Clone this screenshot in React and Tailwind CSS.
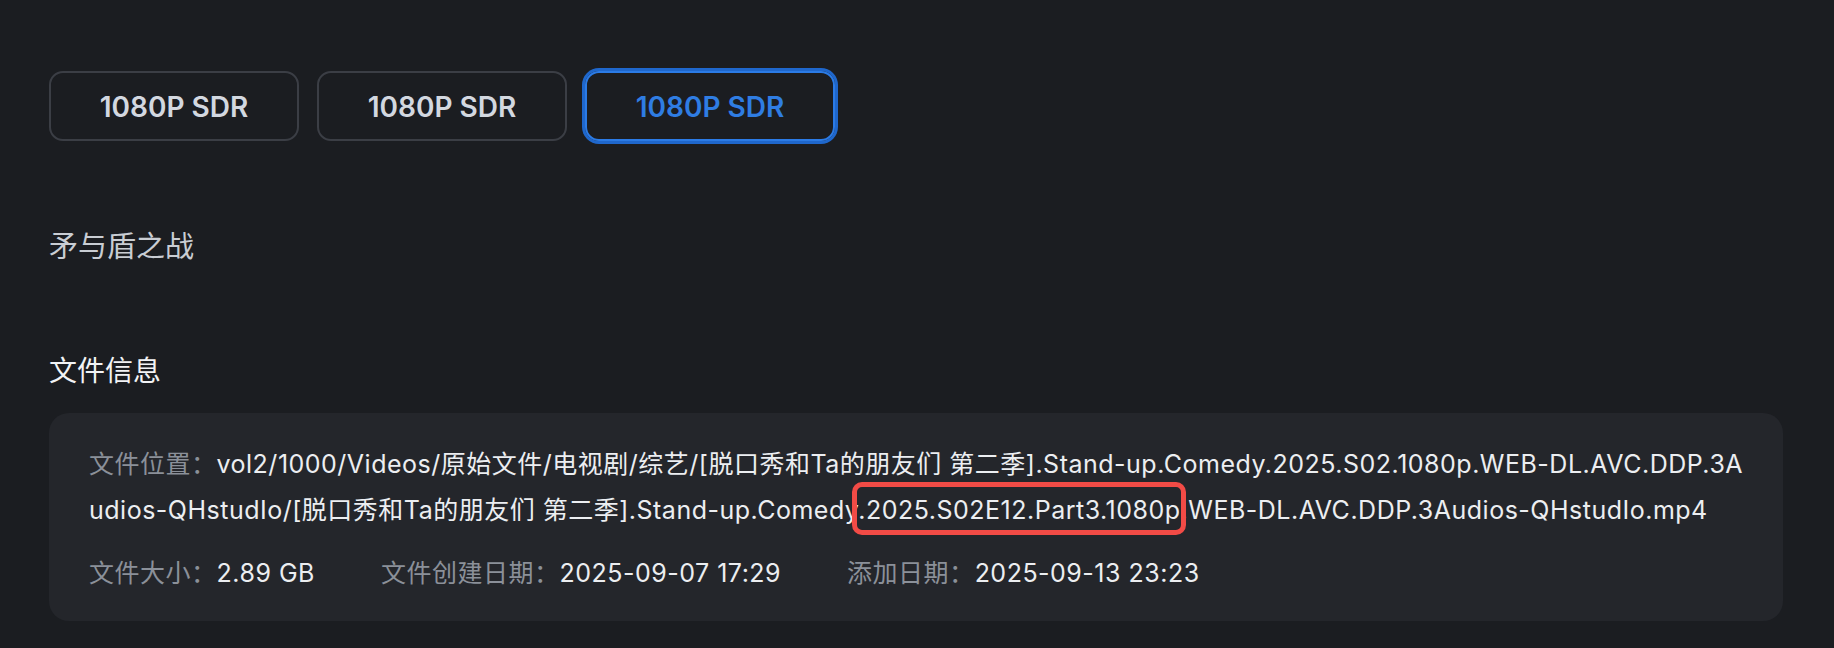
import React from 'react';

const FONT = { fontFamily: 'Inter, "Noto Sans CJK SC", sans-serif' };

const versions = ['1080P SDR', '1080P SDR', '1080P SDR'];

function InfoItem({ label, value }) {
  return (
    <div className="flex items-center">
      <span className="text-[#8b9099]">{label}：</span>
      <span className="text-[#eceef1]">{value}</span>
    </div>
  );
}

export default function App() {
  const active = 2;

  return (
    <div className="w-full h-[648px] bg-[#1b1d21] pl-[49px] pr-[51px] pt-[71px]" style={FONT}>
      {/* version buttons */}
      <div className="flex gap-[18px]">
        {versions.map((v, i) => (
          <button
            key={i}
            className={`w-[250px] h-[70px] rounded-[14px] border-2 text-[28px] font-semibold flex items-center justify-center pt-[2px] ${
              i === active
                ? 'border-[#2b7be6] text-[#2f7de3] ring-[3px] ring-[#1f67cc]'
                : 'border-[#3b3e45] text-[#d3d8e0]'
            }`}
          >
            {v}
          </button>
        ))}
      </div>

      <h2 className="mt-[88px] text-[29px] leading-[36px] text-[#c9cdd3]">矛与盾之战</h2>

      <h3 className="mt-[88px] text-[28px] leading-[36px] text-[#f2f3f5]">文件信息</h3>

      {/* file info card */}
      <div className="mt-[24px] bg-[#24262b] rounded-[20px] pl-[40px] pr-[38px] pt-[28px] pb-[25px] text-[25px] leading-[46px] tracking-[0.5px]">
        <p className="break-all">
          <span className="text-[#8b9099]">文件位置：</span>
          <span className="text-[#eceef1]">
            vol2/1000/Videos/原始文件/电视剧/综艺/[脱口秀和Ta的朋友们 第二季].Stand-up.Comedy.2025.S02.1080p.WEB-DL.AVC.DDP.3Audios-QHstudIo/[脱口秀和Ta的朋友们 第二季].Stand-up.Comedy
            <span className="relative">
              .2025.S02E12.Part3.1080p
              <span className="absolute -left-[6px] -right-[5px] -top-[13px] -bottom-[10px] border-[5px] border-[#f24b46] rounded-[10px] pointer-events-none" />
            </span>
            .WEB-DL.AVC.DDP.3Audios-QHstudIo.mp4
          </span>
        </p>
        <div className="mt-[17px] flex gap-[66px]">
          <InfoItem label="文件大小" value="2.89 GB" />
          <InfoItem label="文件创建日期" value="2025-09-07 17:29" />
          <InfoItem label="添加日期" value="2025-09-13 23:23" />
        </div>
      </div>
    </div>
  );
}
